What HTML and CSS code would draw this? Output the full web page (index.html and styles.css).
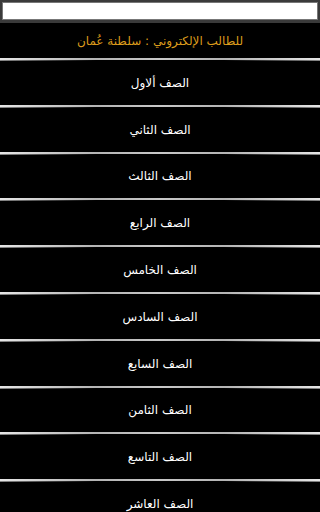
FILE: index.html
```html
<!DOCTYPE html>
<html lang="ar" dir="rtl">
<head>
<meta charset="utf-8">
<link rel="stylesheet" href="styles.css">
</head>
<body>
<div class="topbar"><div class="search"></div></div>
<div class="header">للطالب الإلكتروني : سلطنة عُمان</div>
<ul class="list">
<li class="item">الصف ألاول</li>
<li class="item">الصف الثاني</li>
<li class="item">الصف الثالث</li>
<li class="item">الصف الرابع</li>
<li class="item">الصف الخامس</li>
<li class="item">الصف السادس</li>
<li class="item">الصف السابع</li>
<li class="item">الصف الثامن</li>
<li class="item">الصف التاسع</li>
<li class="item">الصف العاشر</li>
</ul>
</body>
</html>
```
FILE: styles.css
```css
html, body {
  margin: 0;
  padding: 0;
  background: #000;
  overflow: hidden;
}
body {
  font-family: "DejaVu Sans", sans-serif;
  height: 512px;
}
.topbar {
  background: #3a3a3a;
  padding: 2px 2px 3px 2px;
  height: 18px;
}
.search {
  background: #fff;
  height: 18px;
  box-sizing: border-box;
  border: 1px solid #777;
}
.header,
.item {
  display: flex;
  align-items: center;
  justify-content: center;
  font-size: 12px;
  background-image:
    linear-gradient(to right, #e6e6e6, #b4b4b4 30%, #c8c8c8 50%, #b4b4b4 70%, #e6e6e6),
    linear-gradient(to right, #888, #000 30%, #000 70%, #888);
  background-repeat: no-repeat;
  background-size: 100% 2px, 100% 1px;
  background-position: left bottom 1px, left bottom;
  padding-bottom: 3px;
}
.header {
  height: 35px;
  color: #dc9c1c;
}
.list {
  list-style: none;
  margin: 0;
  padding: 0;
}
.item {
  height: 43.8px;
  color: #fff;
}
```
